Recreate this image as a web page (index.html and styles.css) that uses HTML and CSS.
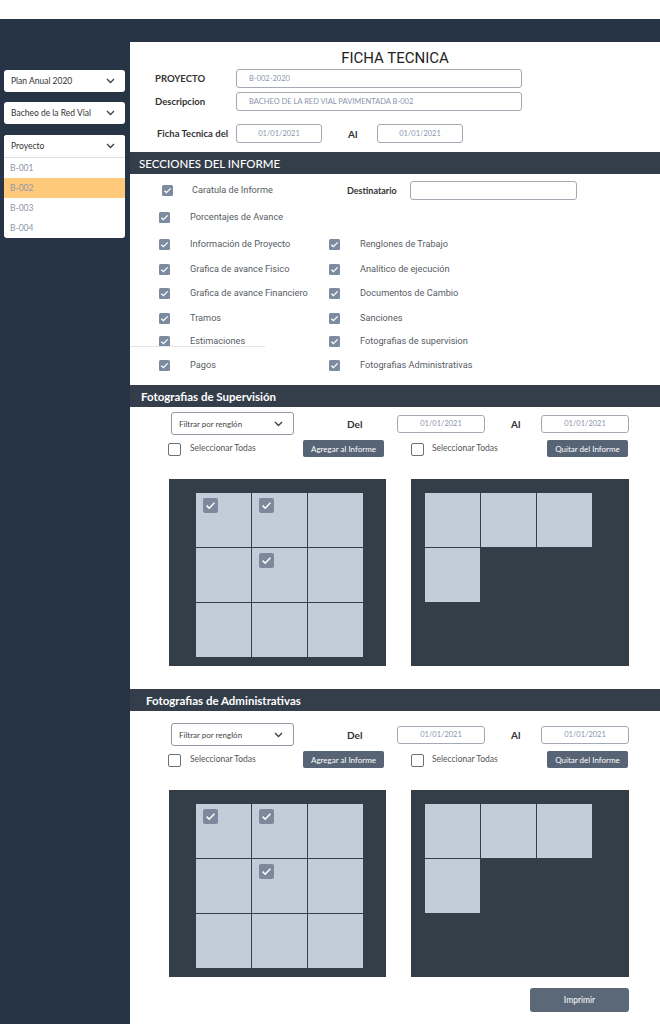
FILE: index.html
```html
<!DOCTYPE html>
<html lang="es">
<head>
<meta charset="utf-8">
<title>Ficha Tecnica</title>
<link rel="stylesheet" href="styles.css">
</head>
<body>
<div class="topgap"></div>
<div class="app">
  <aside class="sidebar">
    <div class="sel">
      <span>Plan Anual 2020</span>
      <svg class="chev" width="9" height="6" viewBox="0 0 9 6"><path d="M1 1l3.5 3.5L8 1" fill="none" stroke="#3a3f45" stroke-width="1.3"/></svg>
    </div>
    <div class="sel">
      <span>Bacheo de la Red Vial</span>
      <svg class="chev" width="9" height="6" viewBox="0 0 9 6"><path d="M1 1l3.5 3.5L8 1" fill="none" stroke="#3a3f45" stroke-width="1.3"/></svg>
    </div>
    <div class="sel-open">
      <div class="sel sel-head">
        <span>Proyecto</span>
        <svg class="chev" width="9" height="6" viewBox="0 0 9 6"><path d="M1 1l3.5 3.5L8 1" fill="none" stroke="#3a3f45" stroke-width="1.3"/></svg>
      </div>
      <ul class="opts">
        <li>B-001</li>
        <li class="active">B-002</li>
        <li>B-003</li>
        <li>B-004</li>
      </ul>
    </div>
  </aside>

  <main class="main">
    <h1 class="title">FICHA TECNICA</h1>
    <div class="frow frow1">
      <span class="flabel">PROYECTO</span>
      <div class="inp wide">B-002-2020</div>
    </div>
    <div class="frow frow2">
      <span class="flabel">Descripcion</span>
      <div class="inp wide">BACHEO DE LA RED VIAL PAVIMENTADA B-002</div>
    </div>
    <div class="frow frow3">
      <span class="flabel flabel3">Ficha Tecnica del</span>
      <div class="inp date">01/01/2021</div>
      <span class="al">Al</span>
      <div class="inp date">01/01/2021</div>
    </div>

    <div class="bar bar-main">SECCIONES DEL INFORME</div>

    <div class="checks">
      <div class="crow crow-first">
        <div class="citem citem-first"><span class="cb"><svg viewBox="0 0 11 11"><path d="M2.4 5.7l2 2L8.7 3.4" fill="none" stroke="#fff" stroke-width="1.3"/></svg></span><span class="ctext">Caratula de Informe</span></div>
        <span class="dest">Destinatario</span>
        <div class="inp dest-inp"></div>
      </div>
      <div class="crow">
        <div class="citem"><span class="cb"><svg viewBox="0 0 11 11"><path d="M2.4 5.7l2 2L8.7 3.4" fill="none" stroke="#fff" stroke-width="1.3"/></svg></span><span class="ctext">Porcentajes de Avance</span></div>
      </div>
      <div class="crow">
        <div class="citem"><span class="cb"><svg viewBox="0 0 11 11"><path d="M2.4 5.7l2 2L8.7 3.4" fill="none" stroke="#fff" stroke-width="1.3"/></svg></span><span class="ctext">Información de Proyecto</span></div>
        <div class="citem"><span class="cb"><svg viewBox="0 0 11 11"><path d="M2.4 5.7l2 2L8.7 3.4" fill="none" stroke="#fff" stroke-width="1.3"/></svg></span><span class="ctext">Renglones de Trabajo</span></div>
      </div>
      <div class="crow">
        <div class="citem"><span class="cb"><svg viewBox="0 0 11 11"><path d="M2.4 5.7l2 2L8.7 3.4" fill="none" stroke="#fff" stroke-width="1.3"/></svg></span><span class="ctext">Grafica de avance Fisico</span></div>
        <div class="citem"><span class="cb"><svg viewBox="0 0 11 11"><path d="M2.4 5.7l2 2L8.7 3.4" fill="none" stroke="#fff" stroke-width="1.3"/></svg></span><span class="ctext">Analítico de ejecución</span></div>
      </div>
      <div class="crow">
        <div class="citem"><span class="cb"><svg viewBox="0 0 11 11"><path d="M2.4 5.7l2 2L8.7 3.4" fill="none" stroke="#fff" stroke-width="1.3"/></svg></span><span class="ctext">Grafica de avance Financiero</span></div>
        <div class="citem"><span class="cb"><svg viewBox="0 0 11 11"><path d="M2.4 5.7l2 2L8.7 3.4" fill="none" stroke="#fff" stroke-width="1.3"/></svg></span><span class="ctext">Documentos de Cambio</span></div>
      </div>
      <div class="crow">
        <div class="citem"><span class="cb"><svg viewBox="0 0 11 11"><path d="M2.4 5.7l2 2L8.7 3.4" fill="none" stroke="#fff" stroke-width="1.3"/></svg></span><span class="ctext">Tramos</span></div>
        <div class="citem"><span class="cb"><svg viewBox="0 0 11 11"><path d="M2.4 5.7l2 2L8.7 3.4" fill="none" stroke="#fff" stroke-width="1.3"/></svg></span><span class="ctext">Sanciones</span></div>
      </div>
      <div class="crow crow-line">
        <div class="citem"><span class="cb"><svg viewBox="0 0 11 11"><path d="M2.4 5.7l2 2L8.7 3.4" fill="none" stroke="#fff" stroke-width="1.3"/></svg></span><span class="ctext">Estimaciones</span></div>
        <div class="citem"><span class="cb"><svg viewBox="0 0 11 11"><path d="M2.4 5.7l2 2L8.7 3.4" fill="none" stroke="#fff" stroke-width="1.3"/></svg></span><span class="ctext">Fotografias de supervision</span></div>
      </div>
      <div class="crow">
        <div class="citem"><span class="cb"><svg viewBox="0 0 11 11"><path d="M2.4 5.7l2 2L8.7 3.4" fill="none" stroke="#fff" stroke-width="1.3"/></svg></span><span class="ctext">Pagos</span></div>
        <div class="citem"><span class="cb"><svg viewBox="0 0 11 11"><path d="M2.4 5.7l2 2L8.7 3.4" fill="none" stroke="#fff" stroke-width="1.3"/></svg></span><span class="ctext">Fotografias Administrativas</span></div>
      </div>
    </div>

    <div class="bar bar-photo">Fotografias de Supervisión</div>
    <section class="psec">
      <div class="tool1">
        <div class="fsel"><span>Filtrar por renglón</span><svg class="chev" width="9" height="6" viewBox="0 0 9 6"><path d="M1 1l3.5 3.5L8 1" fill="none" stroke="#3a3f45" stroke-width="1.3"/></svg></div>
        <span class="tlbl tlbl-del">Del</span>
        <div class="inp pdate">01/01/2021</div>
        <span class="tlbl tlbl-al">Al</span>
        <div class="inp pdate">01/01/2021</div>
      </div>
      <div class="tool2">
        <div class="selall"><span class="ecb"></span><span class="seltext">Seleccionar Todas</span></div>
        <button class="btn">Agregar al Informe</button>
        <div class="selall selall-r"><span class="ecb"></span><span class="seltext">Seleccionar Todas</span></div>
        <button class="btn">Quitar del Informe</button>
      </div>
      <div class="boxes">
        <div class="pbox">
          <div class="pgrid pgrid-l">
            <div class="cell"><span class="badge"><svg viewBox="0 0 15 15"><path d="M3.6 7.6l2.6 2.6 5.2-5.4" fill="none" stroke="#fff" stroke-width="1.5"/></svg></span></div>
            <div class="cell"><span class="badge"><svg viewBox="0 0 15 15"><path d="M3.6 7.6l2.6 2.6 5.2-5.4" fill="none" stroke="#fff" stroke-width="1.5"/></svg></span></div>
            <div class="cell"></div>
            <div class="cell"></div>
            <div class="cell"><span class="badge"><svg viewBox="0 0 15 15"><path d="M3.6 7.6l2.6 2.6 5.2-5.4" fill="none" stroke="#fff" stroke-width="1.5"/></svg></span></div>
            <div class="cell"></div>
            <div class="cell"></div>
            <div class="cell"></div>
            <div class="cell"></div>
          </div>
        </div>
        <div class="pbox pbox-r">
          <div class="pgrid pgrid-r">
            <div class="cell"></div>
            <div class="cell"></div>
            <div class="cell"></div>
            <div class="cell"></div>
          </div>
        </div>
      </div>
    </section>

    <div class="bar bar-photo bar-adm">Fotografias de Administrativas</div>
    <section class="psec psec-adm">
      <div class="tool1 tool1-adm">
        <div class="fsel"><span>Filtrar por renglón</span><svg class="chev" width="9" height="6" viewBox="0 0 9 6"><path d="M1 1l3.5 3.5L8 1" fill="none" stroke="#3a3f45" stroke-width="1.3"/></svg></div>
        <span class="tlbl tlbl-del">Del</span>
        <div class="inp pdate">01/01/2021</div>
        <span class="tlbl tlbl-al">Al</span>
        <div class="inp pdate">01/01/2021</div>
      </div>
      <div class="tool2">
        <div class="selall"><span class="ecb"></span><span class="seltext">Seleccionar Todas</span></div>
        <button class="btn">Agregar al Informe</button>
        <div class="selall selall-r"><span class="ecb"></span><span class="seltext">Seleccionar Todas</span></div>
        <button class="btn">Quitar del Informe</button>
      </div>
      <div class="boxes">
        <div class="pbox">
          <div class="pgrid pgrid-l">
            <div class="cell"><span class="badge"><svg viewBox="0 0 15 15"><path d="M3.6 7.6l2.6 2.6 5.2-5.4" fill="none" stroke="#fff" stroke-width="1.5"/></svg></span></div>
            <div class="cell"><span class="badge"><svg viewBox="0 0 15 15"><path d="M3.6 7.6l2.6 2.6 5.2-5.4" fill="none" stroke="#fff" stroke-width="1.5"/></svg></span></div>
            <div class="cell"></div>
            <div class="cell"></div>
            <div class="cell"><span class="badge"><svg viewBox="0 0 15 15"><path d="M3.6 7.6l2.6 2.6 5.2-5.4" fill="none" stroke="#fff" stroke-width="1.5"/></svg></span></div>
            <div class="cell"></div>
            <div class="cell"></div>
            <div class="cell"></div>
            <div class="cell"></div>
          </div>
        </div>
        <div class="pbox pbox-r">
          <div class="pgrid pgrid-r">
            <div class="cell"></div>
            <div class="cell"></div>
            <div class="cell"></div>
            <div class="cell"></div>
          </div>
        </div>
      </div>
      <div class="printrow"><button class="btn btn-print">Imprimir</button></div>
    </section>
  </main>
</div>
</body>
</html>
```

FILE: styles.css
```css
* { box-sizing: border-box; }

body {
  margin: 0;
  background: #fff;
  font-family: Lato, "Liberation Sans", sans-serif;
  color: #333;
}

.topgap { height: 19px; }

.app {
  display: grid;
  grid-template-columns: 130px 530px;
  padding-top: 23px;
  min-height: 1005px;
  background: #263446;
}

/* ---------- sidebar ---------- */
.sidebar {
  display: flex;
  flex-direction: column;
  gap: 10px;
  padding: 28px 5px 0 4px;
}

.sel {
  height: 22px;
  display: flex;
  align-items: center;
  justify-content: space-between;
  padding: 0 10px 0 7px;
  background: #fff;
  border-radius: 3px;
  font-size: 8.5px;
  color: #333;
}

.sel-open {
  margin-top: 1px;
  background: #fff;
  border-radius: 3px;
  overflow: hidden;
}

.sel-head {
  border-radius: 0;
  border-bottom: 1px solid #dcdfe3;
  height: 23px;
}

.opts {
  list-style: none;
  margin: 0;
  padding: 0;
}

.opts li {
  height: 20px;
  line-height: 20px;
  padding-left: 6px;
  font-size: 8.5px;
  color: #8d96a9;
}

.opts li.active { background: #fec97b; }

/* ---------- main ---------- */
.main {
  background: #fff;
  padding-bottom: 12px;
}

.title {
  margin: 0;
  padding-top: 6px;
  font: 400 15px/20px Roboto, "Liberation Sans", sans-serif;
  text-align: center;
  color: #222;
}

.frow {
  display: flex;
  align-items: center;
  padding-left: 25px;
}
.frow1 { margin-top: 1px; }
.frow2 { margin-top: 4px; }
.frow3 { margin-top: 13px; }

.flabel {
  width: 81px;
  font-size: 9.5px;
  font-weight: 700;
  color: #333;
}
.flabel3 { padding-left: 2px; }

.inp {
  height: 19px;
  display: flex;
  align-items: center;
  border: 1px solid #a3aab4;
  border-radius: 3px;
  font-size: 7.5px;
  color: #8b95ab;
  background: #fff;
}

.wide { width: 286px; padding-left: 12px; }
.date { width: 86px; justify-content: center; }

.al {
  width: 55px;
  padding-left: 26px;
  font-size: 10px;
  font-weight: 700;
}

.bar {
  height: 22px;
  display: flex;
  align-items: center;
  background: #333e4a;
  color: #fff;
  font-size: 12px;
  font-weight: 700;
}
.bar-main { margin-top: 9px; padding-left: 9px; font-size: 11.5px; font-weight: 500; }
.bar-photo { margin-top: 5px; padding-left: 11px; font-size: 11.5px; }
.bar-adm { margin-top: 23px; padding-left: 16px; }

/* ---------- checklist ---------- */
.checks {
  display: grid;
  grid-template-rows: 24px 30px 24px 26px 22px 28px 18px 30px;
  margin-top: 4px;
}

.crow {
  display: flex;
  align-items: center;
  padding-left: 29px;
}
.crow-first { padding-left: 32px; }
.crow-line { position: relative; }
.crow-line::after {
  content: "";
  position: absolute;
  left: 0;
  bottom: 3px;
  width: 135px;
  height: 1px;
  background: #e2e4e7;
}

.citem {
  width: 170px;
  display: flex;
  align-items: center;
  gap: 20px;
}
.citem-first { width: 171px; gap: 19px; }

.cb {
  width: 11px;
  height: 11px;
  flex: none;
  display: block;
  background: #7d8ba0;
  border-radius: 1.5px;
}
.cb svg { display: block; width: 11px; height: 11px; }

.ctext {
  font: 400 9.2px/12px Roboto, "Liberation Sans", sans-serif;
  color: #575c63;
}

.dest {
  width: 63px;
  margin-left: 14px;
  font-size: 9px;
  font-weight: 700;
  color: #333;
}
.dest-inp { width: 167px; }

/* ---------- photo sections ---------- */
.psec { padding-left: 39px; width: 499px; }

.tool1 {
  display: flex;
  align-items: center;
  margin-top: 5px;
  height: 23px;
}
.tool1-adm { margin-top: 12px; }

.fsel {
  width: 123px;
  height: 23px;
  margin-left: 2px;
  display: flex;
  align-items: center;
  justify-content: space-between;
  padding: 0 10px 0 7px;
  border: 1px solid #8f98a3;
  border-radius: 3px;
  font-size: 8px;
  color: #444;
}

.tlbl {
  font-size: 10px;
  font-weight: 700;
  color: #333;
}
.tlbl-del { width: 103px; padding-left: 53px; }
.tlbl-al { width: 56px; padding-left: 26px; }

.pdate {
  width: 88px;
  height: 18px;
  justify-content: center;
}

.tool2 {
  display: flex;
  align-items: center;
  margin-top: 5px;
  height: 17px;
}

.selall {
  width: 135px;
  margin-left: -1px;
  display: flex;
  align-items: flex-start;
  gap: 9px;
  padding-top: 2px;
}
.selall-r { width: 136px; margin-left: 27px; gap: 8px; }

.ecb {
  width: 13px;
  height: 13px;
  flex: none;
  border: 1px solid #6c7079;
  border-radius: 2px;
  background: #fff;
}

.seltext {
  font-size: 8.5px;
  line-height: 10px;
  color: #555;
}

.btn {
  width: 81px;
  height: 17px;
  padding: 0;
  border: none;
  border-radius: 2px;
  background: #566476;
  color: #fff;
  font: 400 8px Lato, "Liberation Sans", sans-serif;
}

.boxes {
  display: flex;
  gap: 25px;
  margin-top: 22px;
}

.pbox {
  width: 217px;
  height: 187px;
  background: #343e49;
  padding: 14px 0 0 27px;
}
.pbox-r { width: 218px; padding-left: 14px; }

.pgrid {
  display: grid;
  grid-template-columns: repeat(3, 55px);
  grid-auto-rows: 54px;
  gap: 1px;
}

.cell {
  background: #c3cdd9;
  padding: 5px 0 0 7px;
}

.badge {
  display: block;
  width: 15px;
  height: 15px;
  background: #7c889b;
  border-radius: 2px;
}
.badge svg { display: block; width: 15px; height: 15px; }

.printrow {
  display: flex;
  justify-content: flex-end;
  margin-top: 11px;
}

.btn-print {
  width: 99px;
  height: 24px;
  border-radius: 3px;
  background: #5b6878;
  font-size: 8.5px;
}
```
